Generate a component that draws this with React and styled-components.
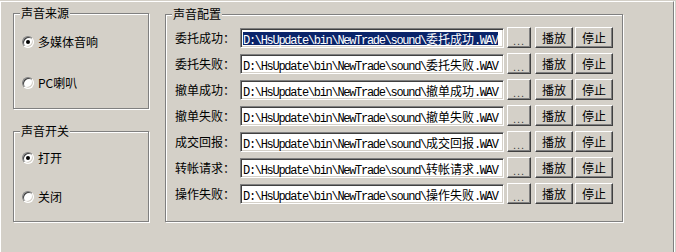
import React from 'react';
import styled, { createGlobalStyle } from 'styled-components';

const Global = createGlobalStyle`
  html, body { margin: 0; padding: 0; background: #d4d0c8; }
  body {
    font-family: "Noto Sans CJK SC", "Liberation Sans", sans-serif;
    font-size: 12px;
    color: #000;
  }
  * { box-sizing: border-box; }
`;

const Window = styled.div`
  width: 676px;
  height: 252px;
  padding: 1px 2px 0 0;
  background: #d4d0c8;
`;

const Frame = styled.div`
  width: 674px;
  height: 251px;
  border-top: 1px solid #fff;
  border-left: 1px solid #fff;
  border-right: 1px solid #808080;
  box-shadow: 1px 0 0 #fff;
  display: flex;
  align-items: flex-start;
  padding: 11px 0 0 12px;
  gap: 16px;
`;

const Column = styled.div`
  width: 136px;
  display: flex;
  flex-direction: column;
  gap: 22px;
`;

const Group = styled.div`
  position: relative;
  width: ${p => p.$w}px;
  height: ${p => p.$h}px;
  margin-top: ${p => p.$top || 0}px;
  border: 1px solid #808080;
  box-shadow: inset 1px 1px 0 #fff, 1px 1px 0 #fff;
  padding: ${p => p.$pad}px 0 0 ${p => p.$left}px;
  display: flex;
  flex-direction: column;
  gap: ${p => p.$gap}px;
`;

const Legend = styled.span`
  position: absolute;
  left: 6px;
  top: -9px;
  padding: 0 1px;
  line-height: 16px;
  background: #d4d0c8;
  white-space: nowrap;
`;

const RadioRow = styled.label`
  display: flex;
  align-items: center;
  gap: 4px;
  height: 12px;
  line-height: 12px;
  white-space: nowrap;
`;

const RadioDot = styled.span`
  width: 12px;
  height: 12px;
  border-radius: 50%;
  background: #fff;
  border: 1px solid;
  border-color: #808080 #fff #fff #808080;
  box-shadow: inset 1px 1px 0 #404040, inset -1px -1px 0 #d4d0c8;
  display: flex;
  align-items: center;
  justify-content: center;
  flex: none;
  &::after {
    content: "";
    width: 4px;
    height: 4px;
    border-radius: 50%;
    background: ${p => (p.$on ? '#000' : 'transparent')};
  }
`;

const Rows = styled.div`
  display: flex;
  flex-direction: column;
  gap: 5px;
`;

const Row = styled.div`
  display: flex;
  align-items: center;
  height: 21px;
`;

const RowLabel = styled.span`
  width: 65px;
  flex: none;
  white-space: nowrap;
  line-height: 21px;
`;

const Field = styled.div`
  width: 264px;
  height: 20px;
  flex: none;
  margin-top: 1px;
  background: #fff;
  border: 1px solid;
  border-color: #808080 #fff #fff #808080;
  box-shadow: inset 1px 1px 0 #404040, inset -1px -1px 0 #d4d0c8;
  padding: 0 0 0 2px;
  display: flex;
  align-items: center;
  white-space: nowrap;
`;

const FieldText = styled.span`
  display: inline-block;
  height: 13px;
  line-height: 13px;
  background: ${p => (p.$sel ? '#0a246a' : 'transparent')};
  color: ${p => (p.$sel ? '#fff' : '#000')};
`;

const Ascii = styled.span`
  font-family: "Liberation Mono", "DejaVu Sans Mono", monospace;
  font-size: 12px;
  letter-spacing: -1.3px;
  vertical-align: baseline;
`;

const Cjk = styled.span`
  font-family: "Noto Sans CJK SC", sans-serif;
  font-size: 12px;
  vertical-align: baseline;
`;

const Button = styled.button`
  width: ${p => p.$w}px;
  height: 21px;
  margin-left: ${p => p.$gap}px;
  flex: none;
  padding: 0;
  background: #d4d0c8;
  border: 1px solid;
  border-color: #fff #404040 #404040 #fff;
  box-shadow: inset -1px -1px 0 #808080;
  font-family: "Noto Sans CJK SC", "Liberation Sans", sans-serif;
  font-size: 12px;
  color: #000;
  line-height: 19px;
`;

const Dots = styled.span`
  font-family: "Liberation Sans", sans-serif;
  font-size: 11px;
  letter-spacing: 1px;
  color: #404040;
  position: relative;
  top: 2px;
`;

function PathText({ text, sel }) {
  const parts = text.split(/([\u4e00-\u9fff]+)/).filter(Boolean);
  return (
    <FieldText $sel={sel}>
      {parts.map((p, i) =>
        /[\u4e00-\u9fff]/.test(p) ? <Cjk key={i}>{p}</Cjk> : <Ascii key={i}>{p}</Ascii>
      )}
    </FieldText>
  );
}

const events = ['委托成功', '委托失败', '撤单成功', '撤单失败', '成交回报', '转帐请求', '操作失败'];

export default function App() {
  return (
    <Window>
      <Global />
      <Frame>
        <Column>
          <Group $w={136} $h={96} $pad={22} $left={8} $gap={29}>
            <Legend>声音来源</Legend>
            <RadioRow><RadioDot $on />多媒体音响</RadioRow>
            <RadioRow><RadioDot />PC喇叭</RadioRow>
          </Group>
          <Group $w={136} $h={91} $pad={20} $left={8} $gap={27}>
            <Legend>声音开关</Legend>
            <RadioRow><RadioDot $on />打开</RadioRow>
            <RadioRow><RadioDot />关闭</RadioRow>
          </Group>
        </Column>
        <Group $w={458} $h={208} $top={1} $pad={12} $left={9} $gap={0}>
          <Legend>声音配置</Legend>
          <Rows>
            {events.map((e, i) => (
              <Row key={e}>
                <RowLabel>{e}：</RowLabel>
                <Field>
                  <PathText text={`D:\\HsUpdate\\bin\\NewTrade\\sound\\${e}.WAV`} sel={i === 0} />
                </Field>
                <Button $w={24} $gap={3}><Dots>...</Dots></Button>
                <Button $w={38} $gap={4}>播放</Button>
                <Button $w={38} $gap={2}>停止</Button>
              </Row>
            ))}
          </Rows>
        </Group>
      </Frame>
    </Window>
  );
}
